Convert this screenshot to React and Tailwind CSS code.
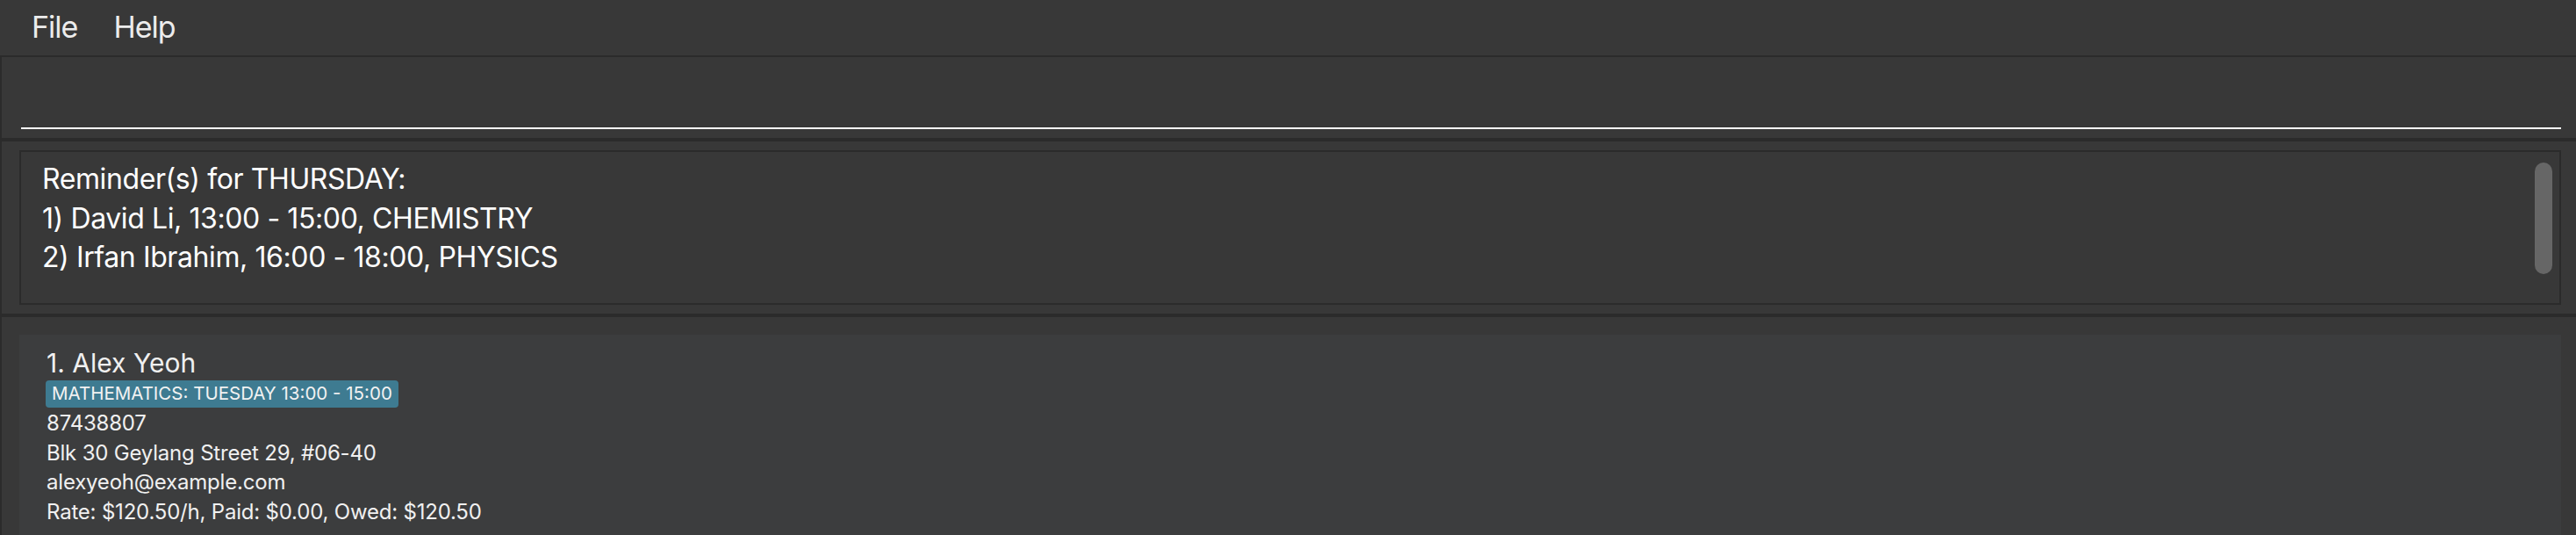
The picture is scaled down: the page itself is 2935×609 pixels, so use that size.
import React from "react";

const details = [
  "87438807",
  "Blk 30 Geylang Street 29, #06-40",
  "alexyeoh@example.com",
  "Rate: $120.50/h, Paid: $0.00, Owed: $120.50",
];

const reminders = [
  "Reminder(s) for THURSDAY:",
  "1) David Li, 13:00 - 15:00, CHEMISTRY",
  "2) Irfan Ibrahim, 16:00 - 18:00, PHYSICS",
];

function MenuBar() {
  return (
    <div className="h-[65px] flex items-start gap-[41px] pl-[36px] pt-[9px] border-b-2 border-[#2b2b2b] text-[34px] leading-[44px] tracking-[-1px] text-[#ececec]">
      <span>File</span>
      <span>Help</span>
    </div>
  );
}

function CommandBox() {
  return (
    <div className="h-[96px] flex items-end pl-[22px] pr-[17px] pb-[10px] border-l-2 border-[#2b2b2b] border-b-4">
      <div className="h-[2px] w-full bg-white" />
    </div>
  );
}

function ReminderBox() {
  return (
    <div className="h-[200px] pl-[20px] pr-[17px] pt-[10px] pb-[10px] border-l-2 border-b-4 border-[#2b2b2b]">
      <div className="h-full flex justify-between border-2 border-[#2b2b2b] pl-[24px] pr-[8px] pt-[9px]">
        <div className="text-[32px] leading-[44.5px] text-white tracking-[-0.4px]">
          {reminders.map((r) => (
            <div key={r}>{r}</div>
          ))}
        </div>
        <div className="w-[20px] h-[127px] mt-[3px] rounded-full bg-[#666666]" />
      </div>
    </div>
  );
}

function PersonCard() {
  return (
    <div className="bg-[#3c3d3e] pl-[31px] pt-[14px] pb-[20px] flex flex-col items-start">
      <div className="text-[30px] leading-[36px] text-[#f0f0f0]">1. Alex Yeoh</div>
      <div className="mt-[2px] bg-[#3e7b91] rounded-[4px] px-[7px] h-[31px] flex items-center text-[20.5px] text-[#f2f2f2] -ml-[1px]">
        MATHEMATICS: TUESDAY 13:00 - 15:00
      </div>
      <div className="text-[24px] leading-[33.5px] tracking-[-0.2px] text-[#f0f0f0] mt-[1px]">
        {details.map((d) => (
          <div key={d}>{d}</div>
        ))}
      </div>
    </div>
  );
}

export default function App() {
  return (
    <div className="w-[2935px] h-[609px] overflow-hidden bg-[#383838] font-['Inter',sans-serif]">
      <MenuBar />
      <CommandBox />
      <ReminderBox />
      <div className="pl-[20px] pr-[17px] pt-[20px] border-l-2 border-[#2b2b2b] h-full">
        <PersonCard />
      </div>
    </div>
  );
}
